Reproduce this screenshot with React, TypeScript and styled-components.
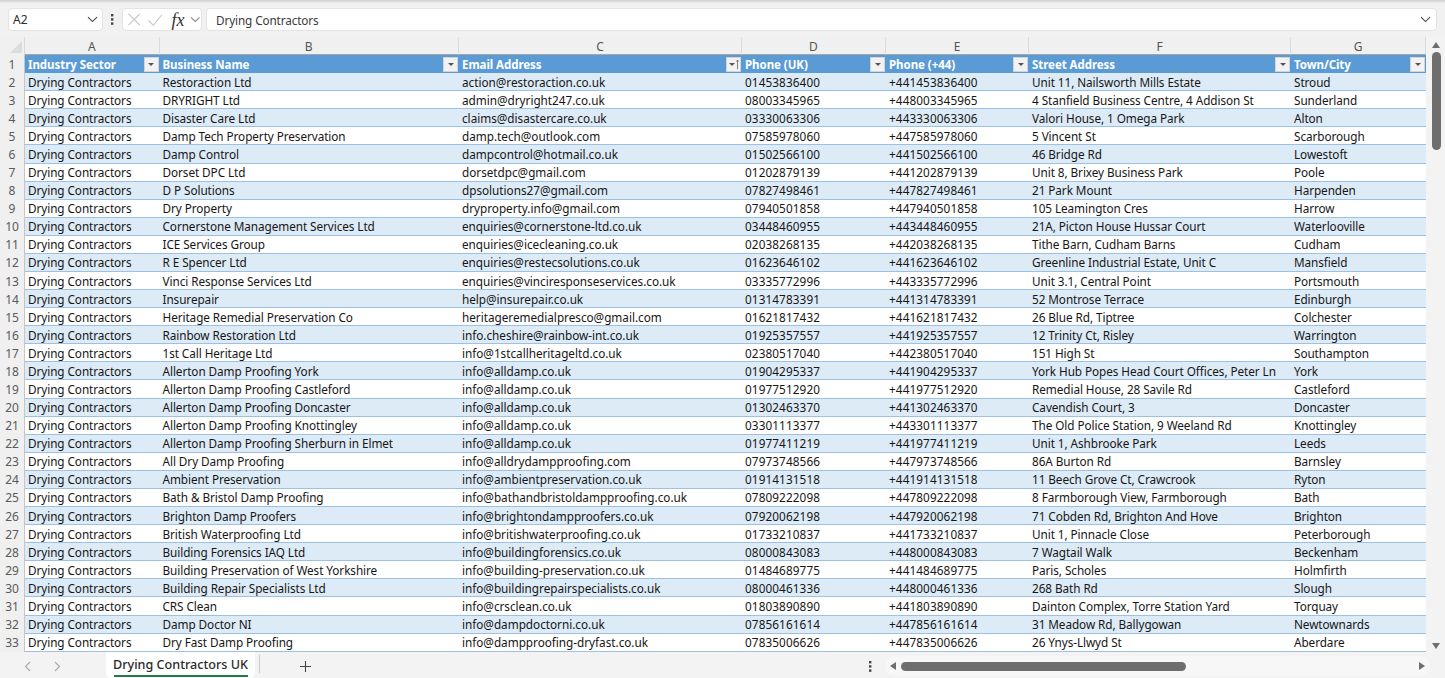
import React from 'react';
import styled, { createGlobalStyle } from 'styled-components';

const Global = createGlobalStyle`
  html, body { margin: 0; padding: 0; height: 100%; background: #f3f3f3; overflow: hidden; }
  #root { height: 678px; width: 1445px; }
`;

const font = `"Noto Sans", "Open Sans", sans-serif`;
const columns = '25px 134.5px 299.5px 283px 144px 143px 262px 135px';
const rowHeight = '18.08px';

const Page = styled.div`
  width: 1445px; height: 678px; display: flex; flex-direction: column;
  background: #f1f1f1; font-family: ${font}; color: #1f1f1f; overflow: hidden;
`;
const TopEdge = styled.div`
  height: 3px; flex: none; background: linear-gradient(#cfcfcf, #ececec);
`;
const FormulaRow = styled.div`
  height: 23px; flex: none; margin: 5px 8px 0 8px; display: flex; align-items: stretch;
`;
const Pill = styled.div`
  background: #fff; border: 1px solid #e3e3e3; border-radius: 4px; box-sizing: border-box;
  display: flex; align-items: center;
`;
const NameBox = styled(Pill)`
  width: 95px; padding: 0 4px 0 4px; justify-content: space-between; font-size: 12px; color: #2b2b2b;
`;
const Kebab = styled.div`
  width: 19px; display: flex; align-items: center; justify-content: center;
`;
const FnBox = styled(Pill)`
  width: 80px; padding: 0 1px 0 5px; gap: 8px; color: #c4c4c4;
`;
const FxText = styled.span`
  font-family: "Liberation Serif", serif; font-style: italic; font-weight: 400; font-size: 18px;
  color: #333; margin: 0 -3px 0 1px; line-height: 1;
`;
const FormulaInput = styled(Pill)`
  flex: 1; margin-left: 4px; padding: 0 5px 0 9px; justify-content: space-between;
  font-size: 11.75px; letter-spacing: -0.12px; color: #3a3a3a;
`;
const SheetArea = styled.div`
  flex: 1; min-height: 0; margin-top: 6px; display: flex; position: relative;
`;
const Grid = styled.div`
  width: 1426px; flex: none; display: grid; grid-template-columns: ${columns};
  grid-auto-rows: ${rowHeight}; align-content: start; background: transparent;
`;
const Corner = styled.div`
  background: #f0f0f0; position: relative; border-right: 1px solid #d8d8d8; box-sizing: border-box;
  &::after {
    content: ''; position: absolute; right: 2px; bottom: 2px; width: 0; height: 0;
    border-style: solid; border-width: 0 0 12px 12px; border-color: transparent transparent #dcdcdc transparent;
  }
`;
const ColHead = styled.div`
  background: #f0f0f0; border-right: 1px solid #dcdcdc; border-bottom: 1px solid #a6a6a6;
  box-sizing: border-box; display: flex; align-items: center; justify-content: center;
  font-size: 12px; color: #555; padding-top: 1px;
`;
const RowHead = styled.div`
  background: #f0f0f0; border-right: 1px solid #c6c6c6; box-sizing: border-box; display: flex;
  align-items: center; justify-content: center; font-size: 12px; color: #5a5a5a;
`;
const HeadCell = styled.div`
  background: #5b9bd5; color: #fff; font-weight: 700; font-size: 11.5px; letter-spacing: -0.05px; display: flex;
  align-items: center; justify-content: space-between; padding: 0 1px 0 3px;
  box-sizing: border-box; white-space: nowrap; overflow: hidden;
`;
const FilterButton = styled.div`
  width: 15px; height: 15px; background: #f2f2f2; border: 1px solid #d4d4d4; box-sizing: border-box;
  display: flex; align-items: center; justify-content: center; gap: 1px; flex: none;
`;
const FilterTri = styled.span`
  width: 0; height: 0; border-style: solid; border-width: 3px 3px 0 3px;
  border-color: #555 transparent transparent transparent;
`;
const kindSpacing = { text: '-0.07px', email: '-0.02px', phone: '0.1px' };
const Cell = styled.div<{ $band: boolean; $kind: 'text' | 'email' | 'phone' }>`
  background: ${p => (p.$band ? '#ddebf7' : '#fff')};
  border-bottom: 1px solid #9bc2e6; box-sizing: border-box; padding: 0 3px;
  display: flex; align-items: center; font-size: 11.75px; color: #161616;
  white-space: nowrap; overflow: hidden; letter-spacing: ${p => kindSpacing[p.$kind]};
`;
const VScroll = styled.div`
  width: 19px; flex: none; position: relative; background: #f3f3f3;
`;
const VThumb = styled.div`
  position: absolute; left: 6px; top: 15px; width: 9px; height: 98px; background: #6e6e6e; border-radius: 5px;
`;
const ArrowUp = styled.span`
  position: absolute; left: 6px; top: 5px; width: 0; height: 0; border-style: solid;
  border-width: 0 4.5px 6px 4.5px; border-color: transparent transparent #6e6e6e transparent;
`;
const ArrowDown = styled.span`
  position: absolute; left: 6px; top: 606px; width: 0; height: 0; border-style: solid;
  border-width: 6px 4.5px 0 4.5px; border-color: #6e6e6e transparent transparent transparent;
`;
const TabBar = styled.div`
  height: 26px; flex: none; display: flex; align-items: stretch; background: #f3f3f3;
`;
const NavArrows = styled.div`
  width: 106px; flex: none; display: flex; align-items: center; padding: 3px 0 0 24px; gap: 23px; box-sizing: border-box;
`;
const Tab = styled.div`
  width: 149px; flex: none; background: #fff; border-radius: 0 0 5px 5px; box-sizing: border-box;
  display: flex; align-items: center; justify-content: center; position: relative;
  font-size: 12.6px; font-weight: 500; color: #2a2a2a; padding-bottom: 2px;
  &::after {
    content: ''; position: absolute; left: 8px; right: 7px; bottom: 1px; height: 2px; background: #1e7c45;
  }
`;
const TabDivider = styled.div`
  width: 1px; height: 18px; margin: 3px 0 0 4px; background: #c8c8c8; flex: none;
`;
const AddTab = styled.div`
  width: 90px; flex: none; display: flex; align-items: center; justify-content: center;
  padding-top: 3px; box-sizing: border-box;
`;
const TabSpacer = styled.div` flex: 1; `;
const BarKebab = styled.div`
  width: 14px; flex: none; display: flex; align-items: center; justify-content: center; padding-top: 3px;
`;
const HTrack = styled.div`
  width: 545px; height: 20px; margin: 4px 15px 0 8px; background: #f7f7f7; border-radius: 10px;
  flex: none; display: flex; align-items: center; position: relative; box-sizing: border-box;
`;
const HThumb = styled.div`
  position: absolute; left: 16px; width: 285px; height: 9px; border-radius: 5px; background: #6e6e6e;
`;
const ArrowLeft = styled.span`
  position: absolute; left: 5px; width: 0; height: 0; border-style: solid;
  border-width: 4.5px 6px 4.5px 0; border-color: transparent #6e6e6e transparent transparent;
`;
const ArrowRight = styled.span`
  position: absolute; right: 5px; width: 0; height: 0; border-style: solid;
  border-width: 4.5px 0 4.5px 6px; border-color: transparent transparent transparent #6e6e6e;
`;

const Chevron = ({ color = '#444' }: { color?: string }) => (
  <svg width="11" height="7" viewBox="0 0 11 7"><path d="M1 1.2 5.5 5.6 10 1.2" fill="none" stroke={color} strokeWidth="1.1" /></svg>
);
const Dots = () => (
  <svg width="3" height="11" viewBox="0 0 3 11"><rect x="0" y="0" width="2.4" height="2.4" fill="#444" /><rect x="0" y="4.2" width="2.4" height="2.4" fill="#444" /><rect x="0" y="8.4" width="2.4" height="2.4" fill="#444" /></svg>
);
const Nav = ({ d }: { d: string }) => (
  <svg width="7" height="11" viewBox="0 0 7 11"><path d={d} fill="none" stroke="#a8a8a8" strokeWidth="1.1" /></svg>
);

const letters = ['A', 'B', 'C', 'D', 'E', 'F', 'G'];
const headers = ['Industry Sector', 'Business Name', 'Email Address', 'Phone (UK)', 'Phone (+44)', 'Street Address', 'Town/City'];
const kinds = ['text', 'text', 'email', 'phone', 'phone', 'text', 'text'] as const;
const rows: string[][] = [
  ['Restoraction Ltd', 'action@restoraction.co.uk', '01453836400', 'Unit 11, Nailsworth Mills Estate', 'Stroud'],
  ['DRYRIGHT Ltd', 'admin@dryright247.co.uk', '08003345965', '4 Stanfield Business Centre, 4 Addison St', 'Sunderland'],
  ['Disaster Care Ltd', 'claims@disastercare.co.uk', '03330063306', 'Valori House, 1 Omega Park', 'Alton'],
  ['Damp Tech Property Preservation', 'damp.tech@outlook.com', '07585978060', '5 Vincent St', 'Scarborough'],
  ['Damp Control', 'dampcontrol@hotmail.co.uk', '01502566100', '46 Bridge Rd', 'Lowestoft'],
  ['Dorset DPC Ltd', 'dorsetdpc@gmail.com', '01202879139', 'Unit 8, Brixey Business Park', 'Poole'],
  ['D P Solutions', 'dpsolutions27@gmail.com', '07827498461', '21 Park Mount', 'Harpenden'],
  ['Dry Property', 'dryproperty.info@gmail.com', '07940501858', '105 Leamington Cres', 'Harrow'],
  ['Cornerstone Management Services Ltd', 'enquiries@cornerstone-ltd.co.uk', '03448460955', '21A, Picton House Hussar Court', 'Waterlooville'],
  ['ICE Services Group', 'enquiries@icecleaning.co.uk', '02038268135', 'Tithe Barn, Cudham Barns', 'Cudham'],
  ['R E Spencer Ltd', 'enquiries@restecsolutions.co.uk', '01623646102', 'Greenline Industrial Estate, Unit C', 'Mansfield'],
  ['Vinci Response Services Ltd', 'enquiries@vinciresponseservices.co.uk', '03335772996', 'Unit 3.1, Central Point', 'Portsmouth'],
  ['Insurepair', 'help@insurepair.co.uk', '01314783391', '52 Montrose Terrace', 'Edinburgh'],
  ['Heritage Remedial Preservation Co', 'heritageremedialpresco@gmail.com', '01621817432', '26 Blue Rd, Tiptree', 'Colchester'],
  ['Rainbow Restoration Ltd', 'info.cheshire@rainbow-int.co.uk', '01925357557', '12 Trinity Ct, Risley', 'Warrington'],
  ['1st Call Heritage Ltd', 'info@1stcallheritageltd.co.uk', '02380517040', '151 High St', 'Southampton'],
  ['Allerton Damp Proofing York', 'info@alldamp.co.uk', '01904295337', 'York Hub Popes Head Court Offices, Peter Ln', 'York'],
  ['Allerton Damp Proofing Castleford', 'info@alldamp.co.uk', '01977512920', 'Remedial House, 28 Savile Rd', 'Castleford'],
  ['Allerton Damp Proofing Doncaster', 'info@alldamp.co.uk', '01302463370', 'Cavendish Court, 3', 'Doncaster'],
  ['Allerton Damp Proofing Knottingley', 'info@alldamp.co.uk', '03301113377', 'The Old Police Station, 9 Weeland Rd', 'Knottingley'],
  ['Allerton Damp Proofing Sherburn in Elmet', 'info@alldamp.co.uk', '01977411219', 'Unit 1, Ashbrooke Park', 'Leeds'],
  ['All Dry Damp Proofing', 'info@alldrydampproofing.com', '07973748566', '86A Burton Rd', 'Barnsley'],
  ['Ambient Preservation', 'info@ambientpreservation.co.uk', '01914131518', '11 Beech Grove Ct, Crawcrook', 'Ryton'],
  ['Bath & Bristol Damp Proofing', 'info@bathandbristoldampproofing.co.uk', '07809222098', '8 Farmborough View, Farmborough', 'Bath'],
  ['Brighton Damp Proofers', 'info@brightondampproofers.co.uk', '07920062198', '71 Cobden Rd, Brighton And Hove', 'Brighton'],
  ['British Waterproofing Ltd', 'info@britishwaterproofing.co.uk', '01733210837', 'Unit 1, Pinnacle Close', 'Peterborough'],
  ['Building Forensics IAQ Ltd', 'info@buildingforensics.co.uk', '08000843083', '7 Wagtail Walk', 'Beckenham'],
  ['Building Preservation of West Yorkshire', 'info@building-preservation.co.uk', '01484689775', 'Paris, Scholes', 'Holmfirth'],
  ['Building Repair Specialists Ltd', 'info@buildingrepairspecialists.co.uk', '08000461336', '268 Bath Rd', 'Slough'],
  ['CRS Clean', 'info@crsclean.co.uk', '01803890890', 'Dainton Complex, Torre Station Yard', 'Torquay'],
  ['Damp Doctor NI', 'info@dampdoctorni.co.uk', '07856161614', '31 Meadow Rd, Ballygowan', 'Newtownards'],
  ['Dry Fast Damp Proofing', 'info@dampproofing-dryfast.co.uk', '07835006626', '26 Ynys-Llwyd St', 'Aberdare'],
];

export default function App() {
  return (
    <Page>
      <Global />
      <TopEdge />
      <FormulaRow>
        <NameBox>A2<Chevron /></NameBox>
        <Kebab><Dots /></Kebab>
        <FnBox>
          <svg width="13" height="13" viewBox="0 0 13 13"><path d="M.5.5 12.5 12.5M12.5.5 .5 12.5" stroke="#c4c4c4" strokeWidth="1.1" fill="none" /></svg>
          <svg width="15" height="12" viewBox="0 0 15 12"><path d="M.5 6.5 5.5 11.5 14.5.5" stroke="#c4c4c4" strokeWidth="1.1" fill="none" /></svg>
          <FxText>fx</FxText>
          <Chevron color="#888" />
        </FnBox>
        <FormulaInput>Drying Contractors<Chevron /></FormulaInput>
      </FormulaRow>
      <SheetArea>
        <Grid>
          <Corner />
          {letters.map(l => <ColHead key={l}>{l}</ColHead>)}
          <RowHead>1</RowHead>
          {headers.map((h, i) => (
            <HeadCell key={h}>
              {h}
              <FilterButton>
                <FilterTri />
                {i === 2 && <svg width="3" height="9" viewBox="0 0 3 9"><path d="M1.5 0 1.5 9M.5 1.5 1.5 0 2.5 1.5" stroke="#555" strokeWidth=".7" fill="none" /></svg>}
              </FilterButton>
            </HeadCell>
          ))}
          {rows.map((r, i) => {
            const band = i % 2 === 0;
            const cells = ['Drying Contractors', r[0], r[1], r[2], '+44' + r[2].slice(1), r[3], r[4]];
            return (
              <React.Fragment key={i}>
                <RowHead>{i + 2}</RowHead>
                {cells.map((c, j) => <Cell key={j} $band={band} $kind={kinds[j]}>{c}</Cell>)}
              </React.Fragment>
            );
          })}
        </Grid>
        <VScroll>
          <ArrowUp />
          <VThumb />
          <ArrowDown />
        </VScroll>
      </SheetArea>
      <TabBar>
        <NavArrows>
          <Nav d="M6 1 1.5 5.5 6 10" />
          <Nav d="M1 1 5.5 5.5 1 10" />
        </NavArrows>
        <Tab>Drying Contractors UK</Tab>
        <TabDivider />
        <AddTab>
          <svg width="11" height="11" viewBox="0 0 11 11"><path d="M5.5 0V11M0 5.5H11" stroke="#444" strokeWidth="1.1" /></svg>
        </AddTab>
        <TabSpacer />
        <BarKebab><Dots /></BarKebab>
        <HTrack>
          <ArrowLeft />
          <HThumb />
          <ArrowRight />
        </HTrack>
      </TabBar>
    </Page>
  );
}
